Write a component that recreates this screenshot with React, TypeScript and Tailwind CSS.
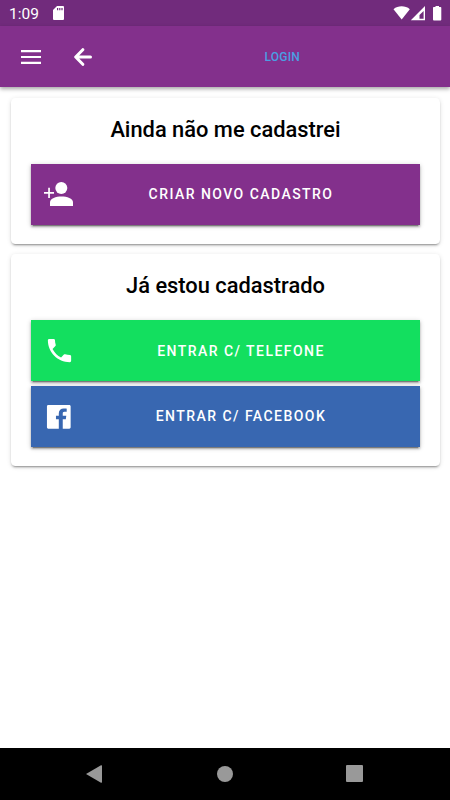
import React from "react";

const cardShadow =
  "shadow-[0_3px_1px_-2px_rgba(0,0,0,0.2),0_2px_2px_0_rgba(0,0,0,0.14),0_1px_5px_0_rgba(0,0,0,0.12)]";

function StatusBar() {
  return (
    <div className="h-[26px] shrink-0 bg-[#712b7c] flex items-center justify-between pl-[9px] pr-2 text-white">
      <div className="flex items-center">
        <span className="w-[44px] text-[15.5px] leading-[26px] pt-[2px]">1:09</span>
        <svg className="w-[11px] h-[14px]" viewBox="0 0 11 14" fill="currentColor">
          <path
            fillRule="evenodd"
            d="M4 0H10a1 1 0 0 1 1 1V13a1 1 0 0 1-1 1H1a1 1 0 0 1-1-1V4ZM4 2V4.2H5.2V2ZM6.2 2V4.2H7.4V2ZM8.4 2V4.2H9.6V2Z"
          />
        </svg>
      </div>
      <svg className="w-[49px] h-[15px]" viewBox="0 0 49 15" fill="currentColor">
        <path d="M.5 3.2C5-.6 12.300-.6 16.800 3.200L8.700 13.500Z" />
        <path fillRule="evenodd" d="M32 0V14.200H17.800ZM30.600 5 26.500 9V12.700H30.600Z" />
        <path d="M41.200 1H42.500V0H46V1H47.500a.8.800 0 0 1 .8.800V13.500a.9.900 0 0 1-.9.900H40.900a.9.900 0 0 1-.9-.9V1.800a.8.800 0 0 1 .8-.8Z" />
      </svg>
    </div>
  );
}

function AppBar() {
  return (
    <header className="relative h-[61px] shrink-0 bg-[#83308c] flex items-center shadow-[0_2px_4px_rgba(0,0,0,0.35)]">
      <svg className="ml-[21px] w-[20px] h-[14px]" viewBox="0 0 20 14" fill="#fff">
        <path d="M0 0H20V2.200H0ZM0 5.900H20V8.100H0ZM0 11.800H20V14H0Z" />
      </svg>
      <svg
        className="ml-[33px] w-[18px] h-[18px]"
        viewBox="0 0 18 18"
        fill="none"
        stroke="#fff"
        strokeWidth="3"
        strokeLinecap="round"
        strokeLinejoin="round"
      >
        <path d="M8.800 1.700 1.700 9l7.100 7.300M2.500 9H16.500" />
      </svg>
      <span className="ml-[172.500px] text-[12px] font-medium tracking-[0.2px] text-[#4a9fe3]">LOGIN</span>
    </header>
  );
}

function PersonAddIcon() {
  return (
    <svg className="w-[30px] h-[26px]" viewBox="0 0 30 26" fill="#fff">
      <circle cx="17.300" cy="7" r="6" />
      <path d="M4.200 6.700H5.900V11H10V12.700H5.900V17H4.200V12.700H0V11H4.200Z" />
      <path d="M6 25V21.500C6 17.500 12 15.600 17.500 15.600S29 17.500 29 21.500V25Z" />
    </svg>
  );
}

function PhoneIcon() {
  return (
    <svg className="w-[31px] h-[31px] shrink-0" viewBox="0 0 24 24" fill="#fff">
      <path d="M6.620 10.790c1.440 2.830 3.760 5.140 6.590 6.590l2.200-2.200c.27-.27.670-.36 1.020-.24 1.120.37 2.330.57 3.570.57.550 0 1 .45 1 1V20c0 .55-.45 1-1 1-9.390 0-17-7.610-17-17 0-.55.450-1 1-1h3.500c.55 0 1 .45 1 1 0 1.250.200 2.450.570 3.570.110.350.030.740-.25 1.020l-2.200 2.200z" />
    </svg>
  );
}

function FacebookIcon() {
  return (
    <svg className="w-[31.6px] h-[31.6px] shrink-0" viewBox="0 0 512 512" fill="#fff">
      <path d="M426.8 64H85.2C73.5 64 64 73.5 64 85.2v341.6c0 11.7 9.5 21.2 21.2 21.2H256V296h-45.900v-56H256v-41.400c0-49.600 34.400-76.600 78.700-76.600 21.200 0 44 1.600 49.300 2.300v51.800h-35.300c-24.100 0-28.700 11.400-28.700 28.200V240h57.400l-7.500 56H320v152h106.800c11.700 0 21.200-9.500 21.200-21.200V85.200c0-11.700-9.500-21.200-21.200-21.200z" />
    </svg>
  );
}

type ActionProps = { color: string; icon: React.ReactNode; label: string };

function ActionButton({ color, icon, label }: ActionProps) {
  return (
    <button
      className={`flex items-center w-full h-[60.7px] pl-[13px] pr-[12px] text-white shadow-[0_3px_1px_-2px_rgba(0,0,0,0.3),0_2px_2px_0_rgba(0,0,0,0.24),0_1px_5px_0_rgba(0,0,0,0.2)] ${color}`}
    >
      <span className="w-[30px] flex justify-center shrink-0">{icon}</span>
      <span className="flex-1 text-center text-[14px] font-medium tracking-[1.45px] pt-[1px]">{label}</span>
    </button>
  );
}

function Card({ title, children }: { title: string; children: React.ReactNode }) {
  return (
    <section className={`rounded-[4.500px] bg-white px-5 pt-[18.5px] pb-[19px] ${cardShadow}`}>
      <h2 className="text-center text-[21.85px] leading-[26px] font-medium text-black mb-[21.4px]">{title}</h2>
      <div className="flex flex-col gap-[5px]">{children}</div>
    </section>
  );
}

export default function App() {
  return (
    <div className="w-[450px] h-[800px] flex flex-col bg-white overflow-hidden font-[Roboto,sans-serif]">
      <StatusBar />
      <AppBar />
      <main className="flex-1 flex flex-col gap-[10.800px] pt-[11px] pl-[11px] pr-[10px]">
        <Card title="Ainda não me cadastrei">
          <ActionButton color="bg-[#83308c]" icon={<PersonAddIcon />} label="CRIAR NOVO CADASTRO" />
        </Card>
        <Card title="Já estou cadastrado">
          <ActionButton color="bg-[#13df5f]" icon={<PhoneIcon />} label="ENTRAR C/ TELEFONE" />
          <ActionButton color="bg-[#3867b1]" icon={<FacebookIcon />} label="ENTRAR C/ FACEBOOK" />
        </Card>
      </main>
      <nav className="h-[52.500px] shrink-0 bg-black flex items-center justify-between pl-[86px] pr-[87px]">
        <svg className="w-[16px] h-[18px]" viewBox="0 0 16 18" fill="#999">
          <path d="M0 9 15 .3Q16 0 16 1V17Q16 18 15 17.700Z" />
        </svg>
        <span className="w-4 h-4 ml-[1.500px] rounded-full bg-[#999]" />
        <span className="w-[17px] h-[17px] rounded-[1px] bg-[#999]" />
      </nav>
    </div>
  );
}
